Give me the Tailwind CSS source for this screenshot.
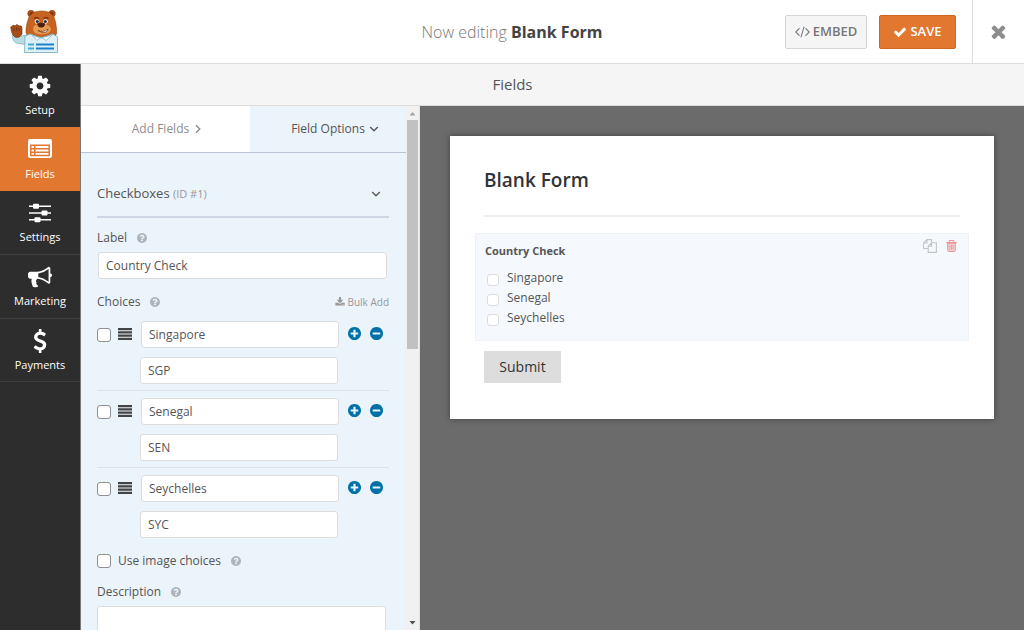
<!DOCTYPE html>
<html lang="en">
  <head>
    <meta charset="UTF-8" />
    <meta name="viewport" content="width=device-width, initial-scale=1.0" />
    <title>Form Builder - Blank Form</title>
    <script src="https://cdn.jsdelivr.net/npm/@tailwindcss/browser@4"></script>
  </head>
  <body class="font-['Segoe_UI','Open_Sans','Noto_Sans',sans-serif] text-xs text-[#555]">
    <!-- icon set -->
    <svg class="hidden">
      <symbol id="cog" viewBox="0 0 1792 1792"><path d="M1152 896q0-106-75-181t-181-75-181 75-75 181 75 181 181 75 181-75 75-181zm512-109v222q0 12-8 23t-20 13l-185 28q-19 54-39 91 35 50 107 138 10 12 10 25t-9 23q-27 37-99 108t-94 71q-12 0-26-9l-138-108q-44 23-91 38-16 136-29 186-7 28-36 28h-222q-14 0-24.500-8.500t-11.500-21.500l-28-184q-49-16-90-37l-141 107q-10 9-25 9-14 0-25-11-126-114-165-168-7-10-7-23 0-12 8-23 15-21 51-66.500t54-70.500q-27-50-41-99l-183-27q-13-2-21-12.500t-8-23.500v-222q0-12 8-23t19-13l186-28q14-46 39-92-40-57-107-138-10-12-10-24 0-10 9-23 26-36 98.500-107.500t94.500-71.500q13 0 26 10l138 107q44-23 91-38 16-136 29-186 7-28 36-28h222q14 0 24.500 8.500t11.500 21.500l28 184q49 16 90 37l142-107q9-9 24-9 13 0 25 10 129 119 165 170 7 8 7 22 0 12-8 23-15 21-51 66.500t-54 70.500q26 50 41 98l183 28q13 2 21 12.500t8 23.500z"/></symbol>
      <symbol id="list" viewBox="0 0 24 19"><path fill-rule="evenodd" d="M2 0h20q2 0 2 2v15q0 2-2 2H2q-2 0-2-2V2q0-2 2-2zM2 5.500v11q0 .8.8.8h18.400q.8 0 .8-.8v-11z"/><path d="M3.500 7H6v2H3.500zM7.500 7h13v2h-13zM3.500 10.500H6v2H3.500zM7.500 10.500h13v2h-13zM3.500 14H6v1.700H3.500zM7.500 14h13v1.700h-13z"/></symbol>
      <symbol id="sliders" viewBox="0 0 22 20"><path d="M0 2.500h22v1.600H0zM0 9.200h22v1.600H0zM0 16h22v1.600H0z"/><rect x="4" y="0.800" width="6" height="5" rx="1"/><rect x="12.500" y="7.500" width="6" height="5" rx="1"/><rect x="5.500" y="14.300" width="6" height="5" rx="1"/></symbol>
      <symbol id="bullhorn" viewBox="0 0 1792 1792"><path d="M1664 640q53 0 90.500 37.500t37.500 90.500-37.500 90.500-90.500 37.500v384q0 52-38 90t-90 38q-417-347-812-380-58 19-91 66t-31 100.500 40 92.500q-20 33-23 65.500t6 58 33.500 55 48 50 61.500 50.500q-29 58-111.500 83t-168.500 11.500-132-55.500q-7-23-29.500-87.500t-32-94.500-23-89-15-101 3.500-98.500 22-110.500h-122q-66 0-113-47t-47-113v-192q0-66 47-113t113-47h480q435 0 896-384 52 0 90 38t38 90v384zm-128 604v-954q-394 302-768 343v270q377 42 768 341z"/></symbol>
      <symbol id="dollar" viewBox="0 0 1792 1792"><path d="M1362 1185q0 153-99.500 263.500t-258.500 136.500v175q0 14-9 23t-23 9h-135q-13 0-22.500-9.500t-9.500-22.500v-175q-66-9-127.500-31t-101.500-44.500-74-48-46.500-37.500-17.500-18q-17-21-2-41l103-135q7-10 23-12 15-2 24 9l2 2q113 99 243 125 37 8 74 8 81 0 142.500-43t61.500-122q0-28-15-53t-33.500-42-58.500-37.500-66-32-80-32.500q-39-16-61.500-25t-61.500-26.500-62.500-31-56.500-35.500-53.500-42.500-43.500-49-35.500-58-21-66.500-8.500-78q0-138 98-242t255-134v-180q0-13 9.500-22.500t22.500-9.500h135q14 0 23 9t9 23v176q57 6 110.500 23t87 33.500 63.500 37.500 39 29 15 14q17 18 5 38l-81 146q-8 15-23 16-14 3-27-7-3-3-14.500-12t-39-26.500-58.500-32-74.500-26-85.500-11.500q-95 0-155 43t-60 111q0 26 8.500 48t29.500 41.500 39.500 33 56 31 60.500 27 70 27.500q53 20 81 31.500t76 35 75.500 42.500 62 50 53 63.500 31.500 76.500 13 94z"/></symbol>
      <symbol id="times" viewBox="238 238 1316 1316"><path d="M1490 1322q0 40-28 68l-136 136q-28 28-68 28t-68-28l-294-294-294 294q-28 28-68 28t-68-28l-136-136q-28-28-28-68t28-68l294-294-294-294q-28-28-28-68t28-68l136-136q28-28 68-28t68 28l294 294 294-294q28-28 68-28t68 28l136 136q28 28 28 68t-28 68l-294 294 294 294q28 28 28 68z"/></symbol>
      <symbol id="check" viewBox="0 0 1792 1792"><path d="M1671 566q0 40-28 68l-724 724-136 136q-28 28-68 28t-68-28l-136-136-362-362q-28-28-28-68t28-68l136-136q28-28 68-28t68 28l294 295 656-657q28-28 68-28t68 28l136 136q28 28 28 68z"/></symbol>
      <symbol id="code" viewBox="-40 0 1872 1792"><path d="M553 1399l-50 50q-10 10-23 10t-23-10l-466-466q-10-10-10-23t10-23l466-466q10-10 23-10t23 10l50 50q10 10 10 23t-10 23l-393 393 393 393q10 10 10 23t-10 23zm591-1067l-373 1291q-4 13-15.500 19.500t-23.500 2.500l-62-17q-13-4-19.500-15.500t-2.500-24.500l373-1291q4-13 15.500-19.500t23.500-2.500l62 17q13 4 19.500 15.500t2.500 24.500zm657 651l-466 466q-10 10-23 10t-23-10l-50-50q-10-10-10-23t10-23l393-393-393-393q-10-10-10-23t10-23l50-50q10-10 23-10t23 10l466 466q10 10 10 23t-10 23z"/></symbol>
      <symbol id="plus" viewBox="128 128 1536 1536"><path d="M1344 960v-128q0-26-19-45t-45-19h-256v-256q0-26-19-45t-45-19h-128q-26 0-45 19t-19 45v256h-256q-26 0-45 19t-19 45v128q0 26 19 45t45 19h256v256q0 26 19 45t45 19h128q26 0 45-19t19-45v-256h256q26 0 45-19t19-45zm320-64q0 209-103 385.500t-279.500 279.500-385.500 103-385.500-103-279.500-279.500-103-385.500 103-385.500 279.500-279.500 385.500-103 385.500 103 279.500 279.500 103 385.500z"/></symbol>
      <symbol id="minus" viewBox="128 128 1536 1536"><path d="M1344 960v-128q0-26-19-45t-45-19h-768q-26 0-45 19t-19 45v128q0 26 19 45t45 19h768q26 0 45-19t19-45zm320-64q0 209-103 385.500t-279.500 279.500-385.500 103-385.500-103-279.500-279.500-103-385.500 103-385.500 279.500-279.500 385.500-103 385.500 103 279.500 279.500 103 385.500z"/></symbol>
      <symbol id="help" viewBox="128 128 1536 1536"><path d="M1024 1376v-192q0-14-9-23t-23-9h-192q-14 0-23 9t-9 23v192q0 14 9 23t23 9h192q14 0 23-9t9-23zm256-672q0-88-55.500-163t-138.500-116-170-41q-243 0-371 213-15 24 8 42l132 100q7 6 19 6 16 0 25-12 53-68 86-92 34-24 86-24 48 0 85.500 26t37.500 59q0 38-20 61t-68 45q-63 28-115.500 86.500t-52.500 125.500v36q0 14 9 23t23 9h192q14 0 23-9t9-23q0-19 21.500-49.500t54.500-49.500q32-18 49-28.500t46-35 44.500-48 28-60.500 12.500-81zm384 192q0 209-103 385.500t-279.500 279.500-385.500 103-385.500-103-279.500-279.500-103-385.500 103-385.500 279.500-279.500 385.500-103 385.500 103 279.500 279.500 103 385.500z"/></symbol>
      <symbol id="download" viewBox="0 0 1792 1792"><path d="M1344 1344q0-26-19-45t-45-19-45 19-19 45 19 45 45 19 45-19 19-45zm256 0q0-26-19-45t-45-19-45 19-19 45 19 45 45 19 45-19 19-45zm128-224v320q0 40-28 68t-68 28h-1472q-40 0-68-28t-28-68v-320q0-40 28-68t68-28h465l135 136q58 56 136 56t136-56l136-136h464q40 0 68 28t28 68zm-325-569q17 41-14 70l-448 448q-18 19-45 19t-45-19l-448-448q-31-29-14-70 17-39 59-39h256v-448q0-26 19-45t45-19h256q26 0 45 19t19 45v448h256q42 0 59 39z"/></symbol>
      <symbol id="bars" viewBox="0 0 14 12"><path d="M0 0h14v2.200H0zM0 3.200h14v2.200H0zM0 6.500h14v2.200H0zM0 9.700h14v2.200H0z"/></symbol>
      <symbol id="down" viewBox="0 0 10 10"><path d="M1.200 3L5 6.800 8.800 3" fill="none" stroke="currentColor" stroke-width="1.300"/></symbol>
      <symbol id="right" viewBox="0 0 10 10"><path d="M3 1.200L6.800 5 3 8.800" fill="none" stroke="currentColor" stroke-width="1.400"/></symbol>
      <symbol id="copy" viewBox="0 0 14 14"><path d="M5 9.500H.6V4L4 .6h4.500V4M4 .6V4H.6M5.200 7.200L8.600 3.800h4.800v9.600H5.200zM8.600 3.800v3.400H5.200" fill="none" stroke="currentColor" stroke-width="1.100"/></symbol>
      <symbol id="trash" viewBox="0 0 11 12"><path d="M3.200 2.200V1.300q0-.8.8-.8h3q.8 0 .8.800v.9M.3 2.600h10.400" fill="none" stroke="currentColor" stroke-width="1.100"/><path d="M1.700 3.200h7.600v7.400q0 .9-.9.900H2.600q-.9 0-.9-.9z" fill="currentColor" fill-opacity=".4" stroke="currentColor"/><path d="M3.900 4.800v5M5.500 4.800v5M7.100 4.800v5" stroke="currentColor" stroke-width=".8"/></symbol>
    </svg>

    <div class="flex flex-col h-screen overflow-hidden">
      <header class="flex shrink-0 h-16 bg-white border-b border-[#ddd]">
        <div class="flex-1 pl-[10px] pt-[9px]">
          <svg class="w-12 h-11" viewBox="0 0 48 44">
            <path d="M3 23Q1 31 6 34L15 35.500 18 26 12 27z" fill="#b9dbe6" stroke="#86b4c4" stroke-width=".8"/>
            <path d="M1 20Q0 17 2 17.500 3 15 5 17 7 14 9 17 12 16 12 19V25Q10 29 6 28.500 2 27 1 20z" fill="#a84d19" stroke="#6d2e0e" stroke-width=".6"/>
            <path d="M4 19v3M6.500 18.500v3M9 19v3" stroke="#6d2e0e" stroke-width=".8"/>
            <circle cx="21" cy="4.500" r="3.600" fill="#a84d19"/><circle cx="42" cy="4.500" r="3.600" fill="#a84d19"/>
            <circle cx="21.500" cy="5" r="1.800" fill="#6d2e0e"/><circle cx="41.500" cy="5" r="1.800" fill="#6d2e0e"/>
            <path d="M19 8Q22 2 31.500 2T44 8Q46 13 46.500 20 48 29 39 30H24Q15 29 16 20 17 13 19 8z" fill="#c8621f" stroke="#8b3f13" stroke-width=".6"/>
            <path d="M23 20Q23 15 31 14.500 40 15 41 20 41 25 31 25.500 23 25 23 20z" fill="#e79a52"/>
            <path d="M24 9.500Q26 7.800 29 9.500M33.500 9.500Q36 7.800 38.500 9.500" fill="none" stroke="#6d2e0e" stroke-width="1.200"/>
            <circle cx="27" cy="12.500" r="2.300" fill="#fff"/><circle cx="35.500" cy="12.500" r="2.300" fill="#fff"/>
            <circle cx="27.300" cy="12.500" r="1.600" fill="#27333d"/><circle cx="35.300" cy="12.500" r="1.600" fill="#27333d"/>
            <path d="M27 14.500Q31 13 35 14.500 35 18.500 31.300 18.500 27.500 18.500 27 14.500z" fill="#4d2110"/>
            <path d="M28 21.500Q33 24 38 20 37 24.500 32 23.500z" fill="#fff" stroke="#6d2e0e" stroke-width=".7"/>
            <path d="M15 27L20 25 31 29 43 25 47.500 28V43.500H14.500z" fill="#def0f5" stroke="#7fb2c3" stroke-width=".9"/>
            <path d="M21 25L27 31.500 31 28 36 31.500 43 25Q37 28.500 31 28.500T21 25z" fill="#fff" stroke="#7fb2c3" stroke-width=".8"/>
            <path d="M18 35.500h6M18 39.500h6" stroke="#3ba9e8" stroke-width="1.800"/>
            <path d="M26 35.500h18M26 39.500h18" stroke="#1880cc" stroke-width="1.800"/>
          </svg>
        </div>
        <h1 class="flex items-center pr-[10px] text-base font-light text-[#777] whitespace-pre">Now editing <b class="font-bold text-[#444]">Blank Form</b></h1>
        <div class="flex flex-1 items-center justify-end">
          <button class="flex items-center justify-center gap-[3px] w-[82px] h-[34px] mr-3 bg-[#f5f5f5] border border-[#d5d5d5] rounded-xs text-[13px] font-semibold text-[#777]">
            <svg class="size-[15px] fill-current"><use href="#code" /></svg>
            EMBED
          </button>
          <button class="flex items-center justify-center gap-[3px] w-[77px] h-[34px] mr-4 bg-[#e27730] border border-[#cd6622] rounded-xs text-[13px] font-semibold text-white">
            <svg class="size-[14px] fill-current"><use href="#check" /></svg>
            SAVE
          </button>
          <button class="flex items-center justify-center w-[52px] h-full border-l border-[#ddd] text-[#8d8d8d]" aria-label="Close">
            <svg class="size-[15px] fill-current"><use href="#times" /></svg>
          </button>
        </div>
      </header>

      <div class="flex flex-1 min-h-0">
        <nav class="w-[81px] shrink-0 bg-[#2d2d2d] border-r border-[#777] text-white text-center">
          <a href="#" class="flex flex-col items-center h-[63px] pt-[10px]">
            <svg class="size-6 fill-current"><use href="#cog" /></svg>
            <span class="mt-1 text-[11px] leading-4">Setup</span>
          </a>
          <a href="#" class="flex flex-col items-center h-16 pt-3 bg-[#e27730]">
            <svg class="w-6 h-[19px] mb-1 fill-current"><use href="#list" /></svg>
            <span class="mt-1 text-[11px] leading-4">Fields</span>
          </a>
          <a href="#" class="flex flex-col items-center h-16 pt-3 border-b border-[#404040]">
            <svg class="w-[22px] h-5 mb-[3px] fill-current"><use href="#sliders" /></svg>
            <span class="mt-[3px] text-[11px] leading-4">Settings</span>
          </a>
          <a href="#" class="flex flex-col items-center h-16 pt-[10px] border-b border-[#404040]">
            <svg class="size-6 fill-current"><use href="#bullhorn" /></svg>
            <span class="mt-1 text-[11px] leading-4">Marketing</span>
          </a>
          <a href="#" class="flex flex-col items-center h-[63px] pt-[10px] border-b border-[#404040]">
            <svg class="size-6 fill-current"><use href="#dollar" /></svg>
            <span class="mt-1 text-[11px] leading-4">Payments</span>
          </a>
        </nav>

        <main class="flex flex-col flex-1 min-w-0">
          <h2 class="shrink-0 h-[42px] pr-20 bg-[#f5f5f5] border-b border-[#ddd] text-[15px] leading-10 text-center">Fields</h2>
          <div class="flex flex-1 min-h-0">
            <aside class="flex w-[339px] shrink-0 overflow-hidden bg-[#ebf3fb]">
              <div class="flex-1 min-w-0">
                <div class="flex h-[47px] border-b border-[#b9c5d6]">
                  <button class="flex items-center justify-center gap-1 w-[169px] pl-1 bg-white text-[#8d8d8d]">
                    Add Fields
                    <svg class="size-[10px]"><use href="#right" /></svg>
                  </button>
                  <button class="flex items-center justify-center gap-1 flex-1 pl-[14px]">
                    Field Options
                    <svg class="size-[10px]"><use href="#down" /></svg>
                  </button>
                </div>

                <div class="px-4 pr-[17px]">
                  <div class="flex items-center justify-between pt-6 pb-[6px] pr-2 border-b-2 border-[#ccd6e4] leading-8">
                    <h3 class="text-[13px]">Checkboxes <span class="text-[11px] text-[#999]">(ID #1)</span></h3>
                    <svg class="size-[10px]"><use href="#down" /></svg>
                  </div>

                  <div class="flex items-center gap-[10px] mt-[10px] mb-1 leading-5">
                    <label for="label">Label</label>
                    <svg class="size-[10px] fill-[#aeb4ba]"><use href="#help" /></svg>
                  </div>
                  <input id="label" type="text" value="Country Check" class="block w-[289px] h-[27px] ml-px px-[7px] bg-white border border-[#ddd] rounded-[3px]" />

                  <div class="flex items-center gap-[10px] mt-[13px] mb-[2px] leading-5">
                    <span>Choices</span>
                    <svg class="size-[10px] fill-[#aeb4ba]"><use href="#help" /></svg>
                    <a href="#" class="flex items-center gap-[2px] ml-auto text-[10px] text-[#999]">
                      <svg class="size-[10px] fill-current"><use href="#download" /></svg>
                      Bulk Add
                    </a>
                  </div>

                  <ul>
                    <li class="pt-[7px] pb-[6px] border-b border-[#dde2e8]">
                      <div class="flex items-center">
                        <input type="checkbox" aria-label="Singapore selected" class="appearance-none size-[14px] mr-[7px] bg-white border border-[#8c8f94] rounded-[3px]" />
                        <svg class="w-[14px] h-3 mr-[9px] mb-[2px] fill-[#444]"><use href="#bars" /></svg>
                        <input type="text" value="Singapore" aria-label="Choice label" class="w-[198px] h-[27px] px-[7px] bg-white border border-[#ddd] rounded-[3px]" />
                        <button class="ml-[9px] mb-[2px]" aria-label="Add choice"><svg class="size-[13px] fill-[#0071a8]"><use href="#plus" /></svg></button>
                        <button class="ml-[9px] mb-[2px]" aria-label="Remove choice"><svg class="size-[13px] fill-[#0071a8]"><use href="#minus" /></svg></button>
                      </div>
                      <input type="text" value="SGP" aria-label="Choice value" class="block w-[198px] h-[27px] mt-[9px] ml-[43px] px-[7px] bg-white border border-[#ddd] rounded-[3px]" />
                    </li>
                    <li class="pt-[7px] pb-[6px] border-b border-[#dde2e8]">
                      <div class="flex items-center">
                        <input type="checkbox" aria-label="Senegal selected" class="appearance-none size-[14px] mr-[7px] bg-white border border-[#8c8f94] rounded-[3px]" />
                        <svg class="w-[14px] h-3 mr-[9px] mb-[2px] fill-[#444]"><use href="#bars" /></svg>
                        <input type="text" value="Senegal" aria-label="Choice label" class="w-[198px] h-[27px] px-[7px] bg-white border border-[#ddd] rounded-[3px]" />
                        <button class="ml-[9px] mb-[2px]" aria-label="Add choice"><svg class="size-[13px] fill-[#0071a8]"><use href="#plus" /></svg></button>
                        <button class="ml-[9px] mb-[2px]" aria-label="Remove choice"><svg class="size-[13px] fill-[#0071a8]"><use href="#minus" /></svg></button>
                      </div>
                      <input type="text" value="SEN" aria-label="Choice value" class="block w-[198px] h-[27px] mt-[9px] ml-[43px] px-[7px] bg-white border border-[#ddd] rounded-[3px]" />
                    </li>
                    <li class="pt-[7px] pb-[6px]">
                      <div class="flex items-center">
                        <input type="checkbox" aria-label="Seychelles selected" class="appearance-none size-[14px] mr-[7px] bg-white border border-[#8c8f94] rounded-[3px]" />
                        <svg class="w-[14px] h-3 mr-[9px] mb-[2px] fill-[#444]"><use href="#bars" /></svg>
                        <input type="text" value="Seychelles" aria-label="Choice label" class="w-[198px] h-[27px] px-[7px] bg-white border border-[#ddd] rounded-[3px]" />
                        <button class="ml-[9px] mb-[2px]" aria-label="Add choice"><svg class="size-[13px] fill-[#0071a8]"><use href="#plus" /></svg></button>
                        <button class="ml-[9px] mb-[2px]" aria-label="Remove choice"><svg class="size-[13px] fill-[#0071a8]"><use href="#minus" /></svg></button>
                      </div>
                      <input type="text" value="SYC" aria-label="Choice value" class="block w-[198px] h-[27px] mt-[9px] ml-[43px] px-[7px] bg-white border border-[#ddd] rounded-[3px]" />
                    </li>
                  </ul>

                  <div class="flex items-center mt-[7px] leading-5">
                    <input id="images" type="checkbox" class="appearance-none size-[14px] mr-[7px] bg-white border border-[#8c8f94] rounded-[3px]" />
                    <label for="images" class="mr-[10px]">Use image choices</label>
                    <svg class="size-[10px] fill-[#aeb4ba]"><use href="#help" /></svg>
                  </div>

                  <div class="flex items-center gap-[10px] mt-[11px] mb-1 leading-5">
                    <label for="description">Description</label>
                    <svg class="size-[10px] fill-[#aeb4ba]"><use href="#help" /></svg>
                  </div>
                  <textarea id="description" class="block w-[289px] h-20 bg-white border border-[#ddd] rounded-[3px] resize-none"></textarea>
                </div>
              </div>

              <!-- scrollbar -->
              <div class="flex flex-col items-center w-[14px] bg-[#f1f1f1] border-r border-[#e2e2e2]">
                <svg class="w-[7px] h-[14px] shrink-0" viewBox="0 0 7 14"><path d="M.5 9.500L3.500 6l3 3.500z" fill="#a3a3a3"/></svg>
                <div class="w-[11px] h-[229px] bg-[#c1c1c1]"></div>
                <svg class="w-[7px] h-[14px] mt-auto shrink-0" viewBox="0 0 7 14"><path d="M.5 5L3.500 8.500l3-3.500z" fill="#505050"/></svg>
              </div>
            </aside>

            <section class="flex-1 min-w-0 p-[30px] bg-[#6b6b6b]">
              <form class="pt-[30px] pb-9 bg-white shadow-[0_0_6px_rgba(0,0,0,0.4)]">
                <h3 class="mx-[34px] pb-[21px] border-b-2 border-[#eee] text-[19px] leading-7 font-semibold text-[#2f3439]">Blank Form</h3>
                <fieldset class="relative mx-[25px] mt-4 px-[9px] pt-2 pb-3 bg-[#f5f9fd] border border-[#eef2f6]">
                  <legend class="float-left w-full text-[11px] leading-[18px] font-bold">Country Check</legend>
                  <div class="absolute top-[5px] right-[11px] flex items-center gap-[9px]">
                    <button type="button" aria-label="Duplicate"><svg class="size-[14px] text-[#c4c4c4]"><use href="#copy" /></svg></button>
                    <button type="button" aria-label="Delete"><svg class="w-[11px] h-3 text-[#eb9595]"><use href="#trash" /></svg></button>
                  </div>
                  <div class="clear-both pt-2">
                    <label class="flex items-center gap-2 h-5 pl-[2px]">
                      <input type="checkbox" class="appearance-none size-3 mt-1 bg-white border border-[#ddd] rounded-[3px]" />
                      Singapore
                    </label>
                    <label class="flex items-center gap-2 h-5 pl-[2px]">
                      <input type="checkbox" class="appearance-none size-3 mt-1 bg-white border border-[#ddd] rounded-[3px]" />
                      Senegal
                    </label>
                    <label class="flex items-center gap-2 h-5 pl-[2px]">
                      <input type="checkbox" class="appearance-none size-3 mt-1 bg-white border border-[#ddd] rounded-[3px]" />
                      Seychelles
                    </label>
                  </div>
                </fieldset>
                <button type="button" class="block w-[77px] h-8 mt-[10px] ml-[34px] bg-[#ddd] text-sm text-[#333]">Submit</button>
              </form>
            </section>
          </div>
        </main>
      </div>
    </div>
  </body>
</html>
